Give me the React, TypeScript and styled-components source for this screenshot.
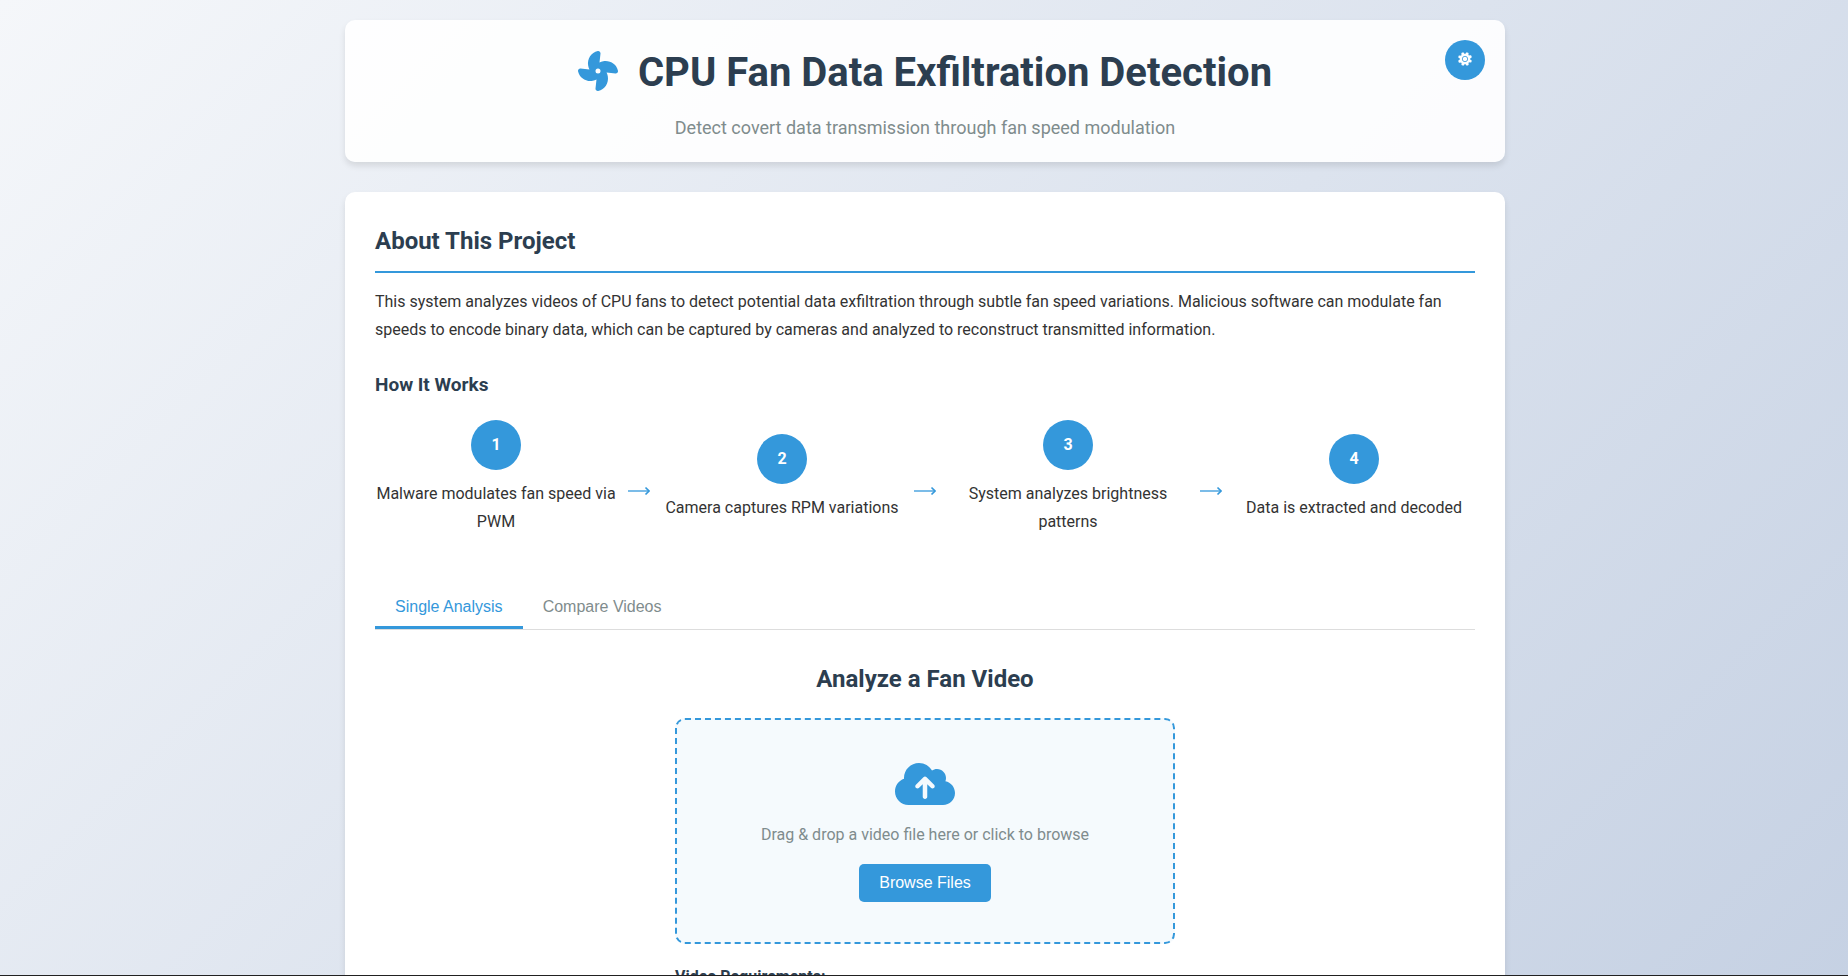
import React from "react";
import styled, { createGlobalStyle } from "styled-components";
import { FaFan, FaCloudArrowUp } from "react-icons/fa6";

const blue = "#3498db";
const navy = "#2c3e50";
const muted = "#7f8c8d";

const GlobalStyle = createGlobalStyle`
  * { box-sizing: border-box; margin: 0; padding: 0; }
  body {
    font-family: Roboto, "Liberation Sans", sans-serif;
    font-size: 16px;
    line-height: 28px;
    color: #333;
    overflow: hidden;
  }
`;

const Viewport = styled.div`
  height: 100vh;
  padding-left: 2px;
  overflow: hidden;
  border-bottom: 1px solid #212121;
  background: linear-gradient(135deg, #f5f7fa 0%, #c3cfe2 100%);
  background-size: 100% 116%;
`;

const Container = styled.div`
  max-width: 1200px;
  margin: 0 auto;
  padding: 20px;
`;

const Header = styled.header`
  position: relative;
  margin-bottom: 30px;
  padding: 20px;
  text-align: center;
  border-radius: 10px;
  background: rgba(255, 255, 255, 0.9);
  box-shadow: 0 4px 6px rgba(0, 0, 0, 0.1);
`;

const Title = styled.h1`
  margin-bottom: 8px;
  font-size: 40px;
  line-height: 66px;
  font-weight: 700;
  color: ${navy};
`;

const FanIcon = styled(FaFan)`
  margin-right: 20px;
  vertical-align: -5px;
  color: ${blue};
`;

const Subtitle = styled.p`
  font-size: 18px;
  color: ${muted};
`;

const SettingsButton = styled.button`
  position: absolute;
  top: 20px;
  right: 20px;
  display: flex;
  align-items: center;
  justify-content: center;
  width: 40px;
  height: 40px;
  padding-bottom: 2px;
  border: none;
  border-radius: 50%;
  color: #fff;
  background: ${blue};
  cursor: pointer;
`;

const Panel = styled.main`
  padding: 30px;
  border-radius: 10px;
  background: #fff;
  box-shadow: 0 4px 6px rgba(0, 0, 0, 0.1);
`;

const SectionTitle = styled.h2`
  margin-bottom: 15px;
  padding-bottom: 10px;
  border-bottom: 2px solid ${blue};
  font-size: 24px;
  line-height: 39px;
  font-weight: 700;
  color: ${navy};
`;

const SubTitle = styled.h3`
  margin: 25px 0 20px;
  font-size: 19px;
  line-height: 31px;
  font-weight: 700;
  color: ${navy};
`;

const Steps = styled.div`
  display: flex;
  align-items: center;
`;

const Step = styled.div`
  flex: 1 1 0;
  text-align: center;
`;

const StepNumber = styled.div`
  display: flex;
  align-items: center;
  justify-content: center;
  width: 50px;
  height: 50px;
  margin: 0 auto 10px;
  border-radius: 50%;
  font-weight: 700;
  color: #fff;
  background: ${blue};
`;

const StepArrow = styled.div`
  display: flex;
  justify-content: center;
  width: 44px;
  padding-top: 26px;
  color: ${blue};
`;

const Tabs = styled.div`
  display: flex;
  margin: 52px 0 30px;
  border-bottom: 1px solid #ddd;
`;

const Tab = styled.button<{ $active?: boolean }>`
  padding: 10px 20px;
  border: none;
  border-bottom: 3px solid ${(p) => (p.$active ? blue : "transparent")};
  font-family: "Liberation Sans", Arial, sans-serif;
  font-size: 16px;
  line-height: 18px;
  color: ${(p) => (p.$active ? blue : muted)};
  background: none;
  cursor: pointer;
`;

const Analysis = styled.section`
  max-width: 500px;
  margin: 0 auto;
`;

const AnalysisTitle = styled.h2`
  margin-bottom: 20px;
  text-align: center;
  font-size: 24px;
  line-height: 38px;
  font-weight: 700;
  color: ${navy};
`;

const DropZone = styled.div`
  display: flex;
  flex-direction: column;
  align-items: center;
  padding: 40px;
  border: 2px dashed ${blue};
  border-radius: 10px;
  color: ${muted};
  background: #f5fafd;
`;

const UploadIcon = styled(FaCloudArrowUp)`
  width: 60px;
  height: 48px;
  color: ${blue};
`;

const DropText = styled.p`
  margin: 13px 0 15px;
`;

const BrowseButton = styled.button`
  padding: 10px 20px;
  border: none;
  border-radius: 5px;
  font-family: "Liberation Sans", Arial, sans-serif;
  font-size: 16px;
  line-height: 18px;
  color: #fff;
  background: ${blue};
  cursor: pointer;
`;

const Requirements = styled.h4`
  margin-top: 20px;
  font-size: 16px;
  line-height: 26px;
  font-weight: 700;
  color: ${navy};
`;

const steps = [
  "Malware modulates fan speed via PWM",
  "Camera captures RPM variations",
  "System analyzes brightness patterns",
  "Data is extracted and decoded",
];

const GearIcon = () => (
  <svg width="14" height="14" viewBox="0 0 14 14" aria-hidden="true">
    {[0, 45, 90, 135, 180, 225, 270, 315].map((a) => (
      <path key={a} d="M5 3 L6 0 L8 0 L9 3Z" fill="currentColor" transform={`rotate(${a + 22} 7 7)`} />
    ))}
    <circle cx="7" cy="7" r="5" fill="currentColor" />
    <circle cx="7" cy="7" r="2.7" fill="none" stroke={blue} strokeWidth="0.8" />
  </svg>
);

const ArrowIcon = () => (
  <svg width="22" height="12" viewBox="0 0 22 12" fill="none" stroke="currentColor" aria-hidden="true">
    <path d="M0 6H20" strokeWidth="2" opacity="0.65" />
    <path d="M17.5 2.5L21 6L17.5 9.5" strokeWidth="1.6" />
  </svg>
);

export default function App() {
  return (
    <>
      <GlobalStyle />
      <Viewport>
        <Container>
          <Header>
            <Title>
              <FanIcon aria-hidden="true" />
              CPU Fan Data Exfiltration Detection
            </Title>
            <Subtitle>Detect covert data transmission through fan speed modulation</Subtitle>
            <SettingsButton type="button" aria-label="Toggle theme">
              <GearIcon />
            </SettingsButton>
          </Header>
          <Panel>
            <SectionTitle>About This Project</SectionTitle>
            <p>
              This system analyzes videos of CPU fans to detect potential data exfiltration through subtle fan speed
              variations. Malicious software can modulate fan speeds to encode binary data, which can be captured by
              cameras and analyzed to reconstruct transmitted information.
            </p>
            <SubTitle>How It Works</SubTitle>
            <Steps>
              {steps.map((text, i) => (
                <React.Fragment key={text}>
                  {i > 0 && (
                    <StepArrow>
                      <ArrowIcon />
                    </StepArrow>
                  )}
                  <Step>
                    <StepNumber>{i + 1}</StepNumber>
                    <p>{text}</p>
                  </Step>
                </React.Fragment>
              ))}
            </Steps>
            <Tabs role="tablist">
              <Tab type="button" role="tab" aria-selected="true" $active>
                Single Analysis
              </Tab>
              <Tab type="button" role="tab" aria-selected="false">
                Compare Videos
              </Tab>
            </Tabs>
            <Analysis>
              <AnalysisTitle>Analyze a Fan Video</AnalysisTitle>
              <DropZone>
                <UploadIcon aria-hidden="true" />
                <DropText>Drag &amp; drop a video file here or click to browse</DropText>
                <BrowseButton type="button">Browse Files</BrowseButton>
              </DropZone>
              <Requirements>Video Requirements:</Requirements>
            </Analysis>
          </Panel>
        </Container>
      </Viewport>
    </>
  );
}
